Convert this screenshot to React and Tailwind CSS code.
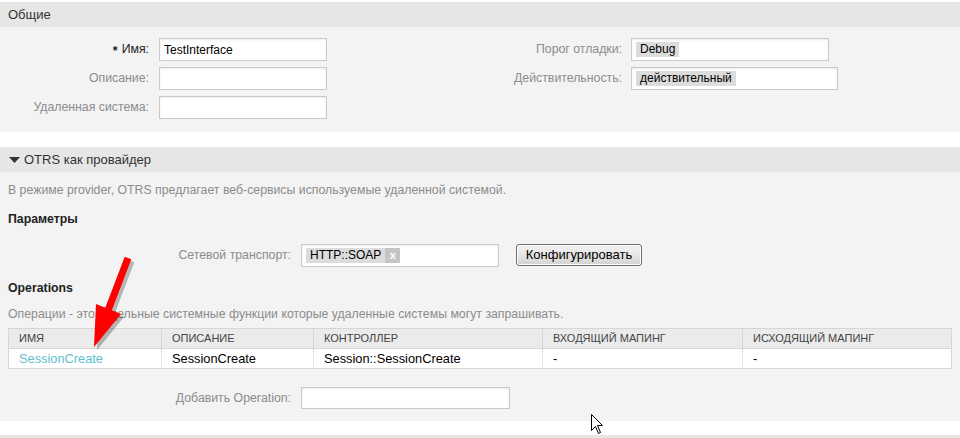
import React from 'react';

const Field = ({ w, children }) => (
    <div className={`h-[23px] bg-white border border-[#c9c9c9] shadow-[inset_0_1px_2px_rgba(0,0,0,0.08)] flex items-center px-[4px] text-[12px] text-black ${w}`}>
        {children}
    </div>
);

const Tag = ({ children }) => (
    <span className="bg-[#dcdcdc] px-[4px] h-[15px] leading-[15px] text-[12px] text-black">{children}</span>
);

const App = () => {
    const cols = [
        { name: 'Имя', w: 'w-[153px]' },
        { name: 'Описание', w: 'w-[152px]' },
        { name: 'Контроллер', w: 'w-[229px]' },
        { name: 'Входящий мапинг', w: 'w-[200px]' },
        { name: 'Исходящий мапинг', w: 'w-[209px]' },
    ];

    return (
        <div className="relative w-[960px] h-[438px] overflow-hidden bg-white pt-[2px] font-['Liberation_Sans',Arial,sans-serif] text-[12.3px]">

            {/* Общие */}
            <div className="h-[25px] bg-[#e6e6e6] px-2 flex items-center text-[13px] text-[#333]">Общие</div>
            <div className="h-[105px] bg-[#f3f3f3] pt-[11px] flex">
                <div className="w-[480px] flex flex-col gap-[6px]">
                    <div className="flex items-center">
                        <label className="w-[150px] text-right text-[#222] pr-[1px]"><span className="font-bold mr-[4px] relative top-[2px]">*</span>Имя:</label>
                        <div className="ml-[9px]"><Field w="w-[168px]">TestInterface</Field></div>
                    </div>
                    <div className="flex items-center">
                        <label className="w-[150px] text-right text-[#8c8c8c] pr-[1px]">Описание:</label>
                        <div className="ml-[9px]"><Field w="w-[168px]" /></div>
                    </div>
                    <div className="flex items-center">
                        <label className="w-[150px] text-right text-[#8c8c8c] pr-[1px]">Удаленная система:</label>
                        <div className="ml-[9px]"><Field w="w-[168px]" /></div>
                    </div>
                </div>
                <div className="flex flex-col gap-[6px]">
                    <div className="flex items-center">
                        <label className="w-[142px] text-right text-[#8c8c8c]">Порог отладки:</label>
                        <div className="ml-[9px]"><Field w="w-[198px]"><Tag>Debug</Tag></Field></div>
                    </div>
                    <div className="flex items-center">
                        <label className="w-[142px] text-right text-[#8c8c8c]">Действительность:</label>
                        <div className="ml-[9px]"><Field w="w-[207px]"><Tag>действительный</Tag></Field></div>
                    </div>
                </div>
            </div>

            {/* OTRS как провайдер */}
            <div className="mt-[15px] h-[25px] bg-[#e6e6e6] px-2 flex items-center text-[13px] text-[#333]">
                <svg width="11" height="6" viewBox="0 0 11 6" className="ml-[1px] mr-[4px]">
                    <polygon points="0,0 11,0 5.5,6" fill="#333" />
                </svg>
                OTRS как провайдер
            </div>
            <div className="h-[249px] bg-[#f3f3f3] pt-[10px]">
                <p className="px-2 leading-[16px] text-[#8c8c8c]">В режиме provider, OTRS предлагает веб-сервисы используемые удаленной системой.</p>
                <h3 className="px-2 mt-[13px] leading-[16px] font-bold text-[#222]">Параметры</h3>

                <div className="mt-[17px] flex items-center">
                    <label className="w-[291px] text-right text-[#8c8c8c]">Сетевой транспорт:</label>
                    <div className="ml-[10px]">
                        <Field w="w-[198px]">
                            <span className="flex h-[15px]">
                                <Tag>HTTP::SOAP</Tag>
                                <span className="bg-[#c4c4c4] w-[15px] text-center leading-[14px] text-[11px] text-white font-bold">x</span>
                            </span>
                        </Field>
                    </div>
                    <button className="ml-[17px] -mt-[2px] w-[126px] h-[22px] rounded-[3px] border border-[#707070] bg-gradient-to-b from-[#f2f2f2] via-[#e6e6e6] to-[#d2d2d2] text-[13px] text-black shadow-[inset_0_0_0_1px_#fcfcfc]">
                        Конфигурировать
                    </button>
                </div>

                <h3 className="px-2 mt-[13px] leading-[16px] font-bold text-[#222]">Operations</h3>
                <p className="px-2 mt-[10px] leading-[16px] text-[#8c8c8c]">Операции - это отдельные системные функции которые удаленные системы могут запрашивать.</p>

                <table className="ml-2 mt-[6px] w-[943px] border-collapse border border-[#d6d6d6] table-fixed">
                    <thead>
                        <tr className="bg-[#ebebeb] h-[20px]">
                            {cols.map((c, i) => (
                                <th key={i} className={`${c.w} border-l border-[#d6d6d6] pl-[10px] text-left font-normal text-[11px] uppercase text-[#444]`}>{c.name}</th>
                            ))}
                        </tr>
                    </thead>
                    <tbody className="text-[12.8px]">
                        <tr className="bg-white h-[20px] border-t border-[#d6d6d6]">
                            <td className="pl-[10px] text-[#5fbfcb]">SessionCreate</td>
                            <td className="pl-[10px] border-l border-dotted border-[#c8c8c8] text-black">SessionCreate</td>
                            <td className="pl-[10px] border-l border-dotted border-[#c8c8c8] text-black">Session::SessionCreate</td>
                            <td className="pl-[10px] border-l border-dotted border-[#c8c8c8] text-black">-</td>
                            <td className="pl-[10px] border-l border-dotted border-[#c8c8c8] text-black">-</td>
                        </tr>
                    </tbody>
                </table>

                <div className="mt-[18px] flex items-center">
                    <label className="w-[291px] text-right text-[#8c8c8c]">Добавить Operation:</label>
                    <div className="ml-[10px]"><Field w="w-[209px] !h-[22px]" /></div>
                </div>
            </div>
            <div className="mt-[14px] h-[5px] bg-[#e6e6e6]" />

            {/* red arrow annotation */}
            <svg className="absolute left-0 top-0 pointer-events-none" width="960" height="438">
                <g transform="translate(3,3)" opacity="0.25">
                    <line x1="128" y1="258" x2="107" y2="313" stroke="#000" strokeWidth="7" />
                    <polygon points="94,347 96,304 121,314" fill="#000" />
                </g>
                <line x1="128" y1="258" x2="107" y2="313" stroke="#ff0000" strokeWidth="7" />
                <polygon points="94,347 96,304 121,314" fill="#ff0000" />
            </svg>

            {/* mouse cursor */}
            <svg className="absolute left-[591px] top-[414px] pointer-events-none" width="13" height="21" viewBox="0 0 13 21">
                <polygon points="0.5,0.5 0.5,16.5 4.5,12.5 7.5,19.5 9.5,18.5 6.5,11.5 11.5,11.5" fill="#fff" stroke="#000" strokeWidth="1" strokeLinejoin="round" />
            </svg>
        </div>
    );
};

export default App;
